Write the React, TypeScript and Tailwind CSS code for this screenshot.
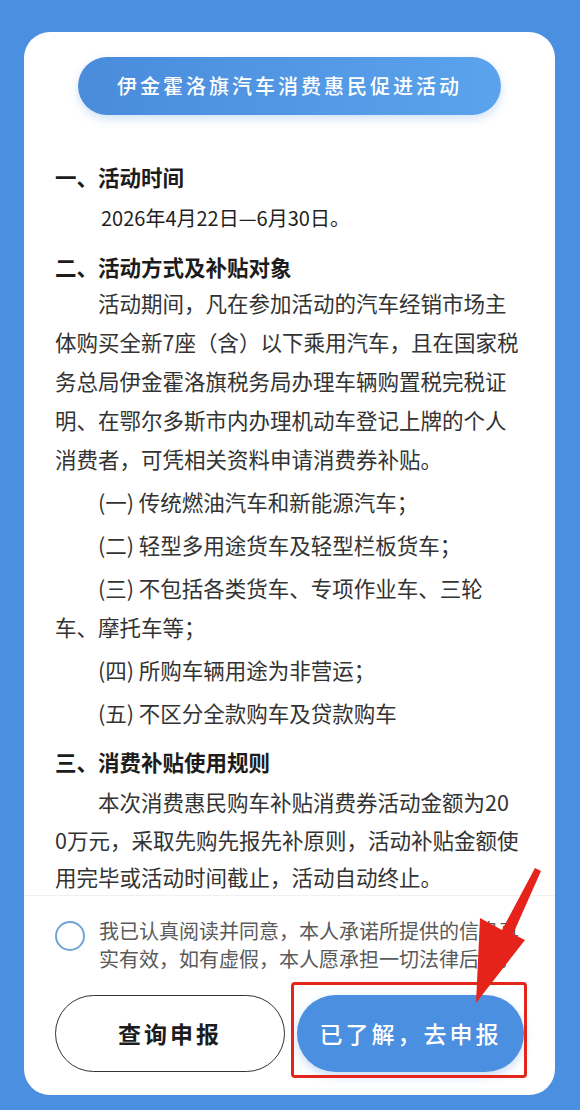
import React from 'react';

const font = { fontFamily: '"Noto Sans CJK SC", "Noto Sans", sans-serif' };

const items = [
  '(一) 传统燃油汽车和新能源汽车；',
  '(二) 轻型多用途货车及轻型栏板货车；',
  '(三) 不包括各类货车、专项作业车、三轮车、摩托车等；',
  '(四) 所购车辆用途为非营运；',
  '(五) 不区分全款购车及贷款购车',
];

export default function App() {
  return (
    <div
      className="relative w-[580px] h-[1110px] overflow-hidden bg-[#4a8fe0] pl-[24px] pt-[32px]"
      style={font}
    >
      {/* Card */}
      <div className="flex flex-col w-[531px] h-[1063px] bg-white rounded-[26px] overflow-hidden">
        {/* Scrollable content */}
        <div className="h-[863px] shrink-0 pt-[25px]">
          <div className="mx-auto w-[423px] h-[58px] rounded-full bg-gradient-to-r from-[#4a8bdc] to-[#5ba3ec] shadow-[0_4px_10px_rgba(74,139,220,0.25)] flex items-center justify-center">
            <span className="text-white text-[20px] font-medium tracking-[3px]">
              伊金霍洛旗汽车消费惠民促进活动
            </span>
          </div>

          <div className="pl-[31px] w-[496px] text-[21.5px] leading-[39px] text-[#333] break-all">
            <h2 className="mt-[42px] font-bold text-[#1c1c1c]">一、活动时间</h2>
            <p className="mt-[2px] pl-[46px] text-[20px] text-[#1f1f1f]">2026年4月22日—6月30日。</p>

            <h2 className="mt-[10px] font-bold text-[#1c1c1c]">二、活动方式及补贴对象</h2>
            <p className="mt-[-3px] indent-[2em]">
              活动期间，凡在参加活动的汽车经销市场主体购买全新7座（含）以下乘用汽车，且在国家税务总局伊金霍洛旗税务局办理车辆购置税完税证明、在鄂尔多斯市内办理机动车登记上牌的个人消费者，可凭相关资料申请消费券补贴。
            </p>
            {items.map((t) => (
              <p key={t} className="mt-[4px] indent-[2em]">
                {t}
              </p>
            ))}

            <h2 className="mt-[10px] font-bold text-[#1c1c1c]">三、消费补贴使用规则</h2>
            <p className="mt-[2px] indent-[2em] leading-[37.5px]">
              本次消费惠民购车补贴消费券活动金额为200万元，采取先购先报先补原则，活动补贴金额使用完毕或活动时间截止，活动自动终止。
            </p>
          </div>
        </div>

        {/* Footer */}
        <div className="flex-1 border-t border-[#f0f0f0] px-[31px] pt-[21px]">
          <div className="flex items-start gap-[14px]">
            <div className="mt-[4px] w-[30px] h-[30px] shrink-0 rounded-full border-2 border-[#6ea5d6]" />
            <p className="w-[428px] text-[20px] leading-[28px] text-[#5a5a5a]">
              我已认真阅读并同意，本人承诺所提供的信息真实有效，如有虚假，本人愿承担一切法律后果。
            </p>
          </div>
          <div className="mt-[22px] flex gap-[12px]">
            <button className="w-[230px] h-[77px] rounded-full border-[1.5px] border-[#333] bg-white text-[23px] font-bold tracking-[3px] text-[#1c1c1c]">
              查询申报
            </button>
            <button className="w-[227px] h-[77px] rounded-full bg-[#4b8fe0] text-[23px] font-medium tracking-[3px] text-white shadow-[0_4px_10px_rgba(75,143,224,0.3)]">
              已了解，去申报
            </button>
          </div>
        </div>
      </div>

      {/* Red annotation box */}
      <div className="absolute left-[291px] top-[982px] w-[236px] h-[96px] rounded-[4px] border-[3px] border-[#e3261c] pointer-events-none" />

      {/* Red annotation arrow */}
      <svg
        className="absolute left-0 top-0 pointer-events-none"
        width="580"
        height="1110"
        viewBox="0 0 580 1110"
      >
        <polygon
          points="535,868 541,871 513,934 525,940 476,1003 480,918 502,930"
          fill="#e5231b"
        />
      </svg>
    </div>
  );
}
